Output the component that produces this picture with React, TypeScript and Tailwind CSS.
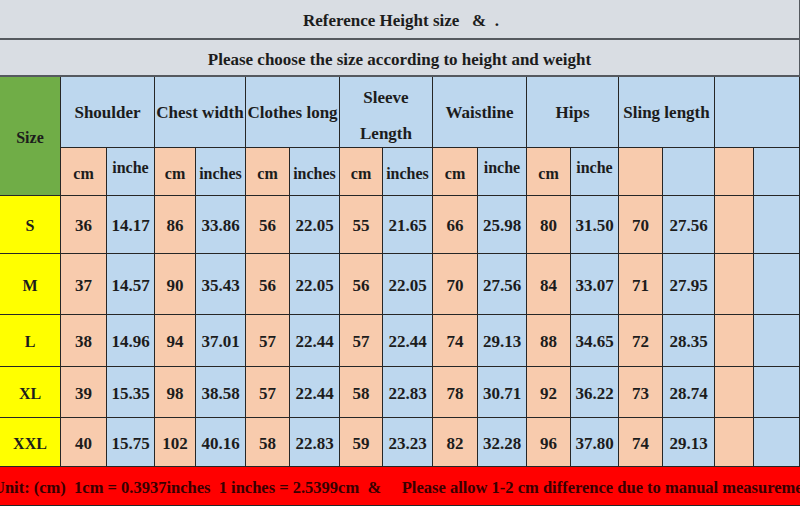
const cols =
  "grid-cols-[60px_45px_47px_40px_49px_43px_49px_42px_49px_44px_48px_43px_47px_43px_51px_38px_45px]";

const peach = "bg-[#f8cbad]";
const blue = "bg-[#bdd7ee]";

const groups = [
  { label: "Shoulder", pad: "pt-[2px]" },
  { label: "Chest width", pad: "pt-[2px]" },
  { label: "Clothes long", pad: "pt-[2px]" },
  { label: "Sleeve\nLength", pad: "pt-[7px]" },
  { label: "Waistline", pad: "pt-[2px]" },
  { label: "Hips", pad: "pt-[2px]" },
  { label: "Sling length", pad: "pt-[2px]" },
  { label: "", pad: "" },
];

const units = ["cm", "inche", "cm", "inches", "cm", "inches", "cm", "inches", "cm", "inche", "cm", "inche", "", "", "", ""];

const rows = [
  { size: "S", values: ["36", "14.17", "86", "33.86", "56", "22.05", "55", "21.65", "66", "25.98", "80", "31.50", "70", "27.56", "", ""] },
  { size: "M", values: ["37", "14.57", "90", "35.43", "56", "22.05", "56", "22.05", "70", "27.56", "84", "33.07", "71", "27.95", "", ""] },
  { size: "L", values: ["38", "14.96", "94", "37.01", "57", "22.44", "57", "22.44", "74", "29.13", "88", "34.65", "72", "28.35", "", ""] },
  { size: "XL", values: ["39", "15.35", "98", "38.58", "57", "22.44", "58", "22.83", "78", "30.71", "92", "36.22", "73", "28.74", "", ""] },
  { size: "XXL", values: ["40", "15.75", "102", "40.16", "58", "22.83", "59", "23.23", "82", "32.28", "96", "37.80", "74", "29.13", "", ""] },
];

export default function App() {
  return (
    <div className="w-[800px] h-[510px] overflow-hidden bg-white font-['Liberation_Serif',serif] font-bold text-[#1c1c1c]">
      <div className="flex h-10 items-center justify-center border-r border-b-2 border-[#55595f] bg-[#d9dde3] pt-1 pl-[3px] text-[17px] whitespace-pre">
        Reference Height size   &amp;  .
      </div>
      <div className="flex h-[37px] items-center justify-center border-r border-b-2 border-[#55595f] bg-[#d9dde3] pt-1 text-[17px]">
        Please choose the size according to height and weight
      </div>

      <div className={`grid ${cols} grid-rows-[70px_47px_57px_60px_51px_50px_48px] gap-px bg-[#262626] pr-px pb-px text-[17px]`}>
        <div className="row-span-2 flex items-center justify-center bg-[#70ad47] pt-1 text-[16px]">Size</div>
        {groups.map((g, i) => (
          <div
            key={i}
            className={`col-span-2 flex items-center justify-center ${blue} ${g.pad} text-center leading-[36px] whitespace-pre-line`}
          >
            {g.label}
          </div>
        ))}
        {units.map((u, i) => (
          <div
            key={i}
            className={`flex items-center justify-center ${i % 2 === 0 ? peach : blue} ${u === "inche" ? "pb-2" : "pt-1"} text-[16px]`}
          >
            {u}
          </div>
        ))}
        {rows.map((r) => (
          <div key={r.size} className="contents">
            <div className="flex items-center justify-center bg-[#ffff00] pt-[3px] text-[16px]">{r.size}</div>
            {r.values.map((v, i) => (
              <div key={i} className={`flex items-center justify-center ${i % 2 === 0 ? peach : blue} pt-[3px]`}>
                {v}
              </div>
            ))}
          </div>
        ))}
      </div>

      <div className="flex h-[39px] items-center overflow-hidden border-b border-[#262626] bg-[#ff0000] pt-1 text-[16.5px] text-[#380000] whitespace-pre">
        <span className="ml-[-7px]">
          Unit: (cm)  1cm = 0.3937inches  1 inches = 2.5399cm  &amp;     Please allow 1-2 cm difference due to manual measurement
        </span>
      </div>
    </div>
  );
}
